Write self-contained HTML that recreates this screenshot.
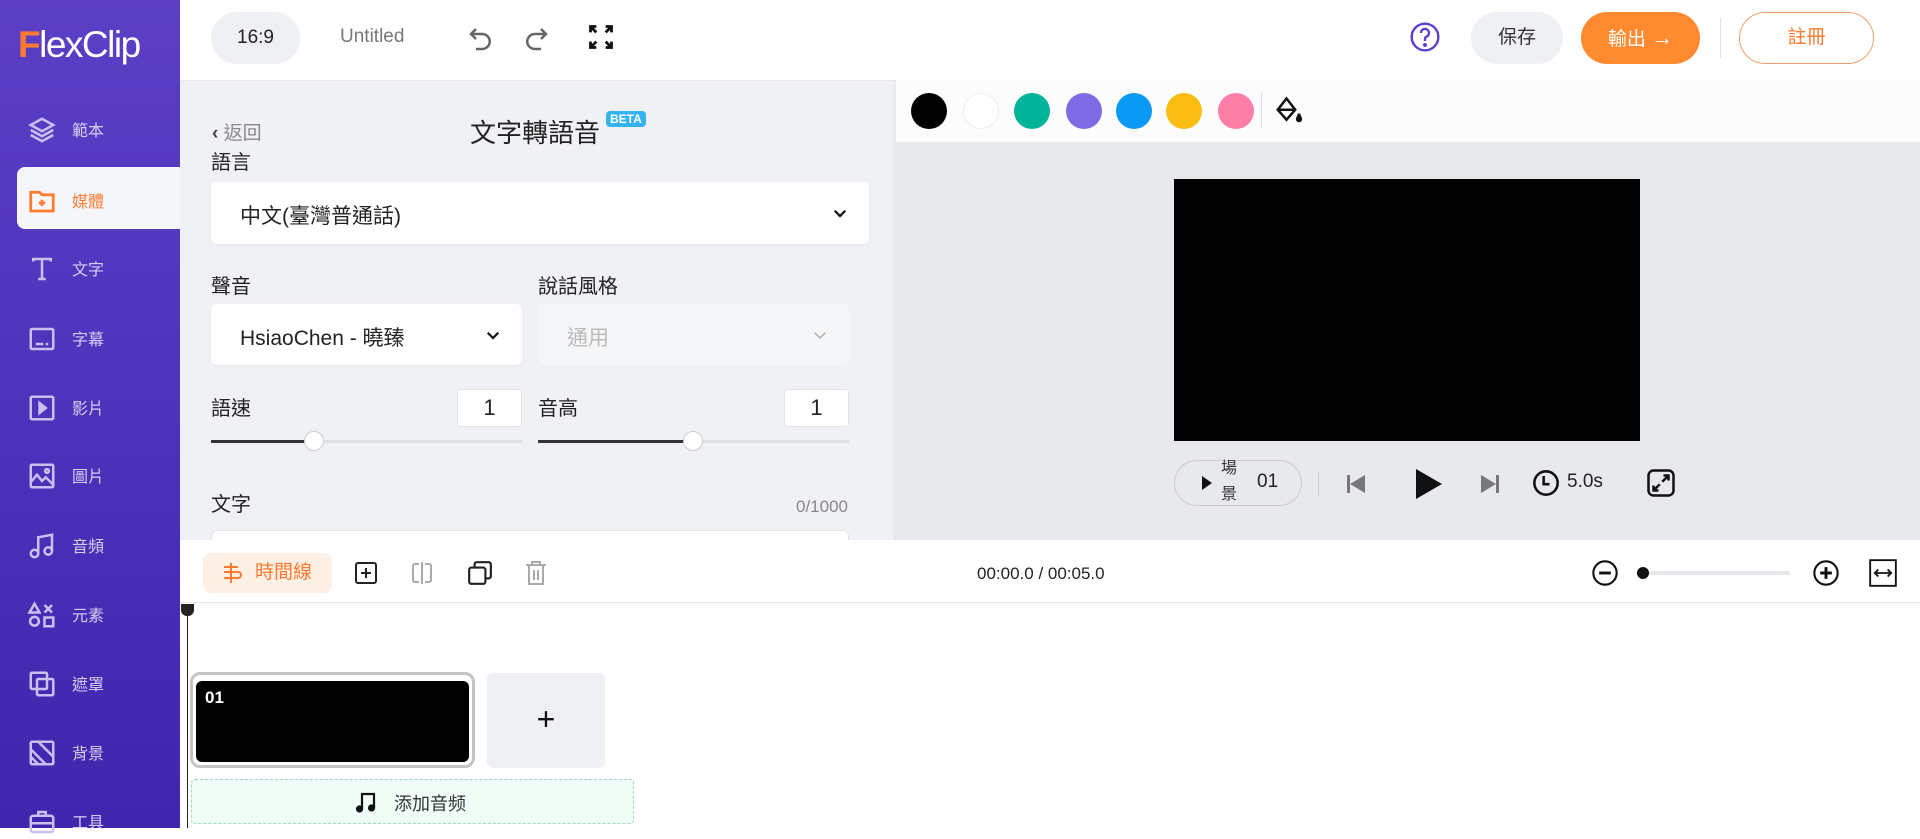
<!DOCTYPE html>
<html><head><meta charset="utf-8"><style>
*{box-sizing:border-box;margin:0;padding:0}
body{width:1920px;height:828px;overflow:hidden;position:relative;background:#fff;font-family:"Liberation Sans","Noto Sans CJK TC",sans-serif;color:#222}
.a{position:absolute}
.side{left:0;top:0;width:180px;height:828px;background:linear-gradient(180deg,#5b40c6 0%,#4a30b8 60%,#4026ad 100%)}
.si{position:absolute;left:0;width:180px;height:40px;color:#d6cff5;font-size:16px}
.si svg{position:absolute;left:27px;top:8px}
.si span{position:absolute;left:72px;top:10px}
.lbl{font-size:20px;color:#222}
.dd{background:#fff;border-radius:6px;box-shadow:0 1px 2px rgba(0,0,0,.05)}
.box{background:#fff;border:1px solid #e3e4e8;border-radius:3px;font-size:22px;text-align:center;line-height:36px}
.dot{width:36px;height:36px;border-radius:50%;top:93px}
</style></head><body>

<div class="a side"></div>
<div class="a" style="left:18px;top:24px;font-size:37px;color:#fff;letter-spacing:-1.5px;font-family:'Liberation Sans',sans-serif"><span style="color:#ff7a2e;font-weight:bold">F</span>lexClip</div>
<div class="a" style="left:17px;top:167px;width:163px;height:62px;background:#f5f6fa;border-radius:8px 0 0 8px"></div>
<div class="si" style="top:107px"><svg width="30" height="30" viewBox="0 0 24 24" fill="none" stroke="#c9c0f0" stroke-width="2"><path d="M12 3 3 8l9 5 9-5z M3 12l9 5 9-5 M3 16l9 5 9-5"/></svg><span>範本</span></div>
<div class="si" style="top:178px;color:#ff7a2e"><svg width="30" height="30" viewBox="0 0 24 24" fill="none" stroke="#ff7a2e" stroke-width="2.2"><path d="M3 5h7l2 2h9v13H3z"/><path d="M12 11v5M9.5 13.5h5"/></svg><span>媒體</span></div>
<div class="si" style="top:246px"><svg width="30" height="30" viewBox="0 0 24 24" fill="none" stroke="#c9c0f0" stroke-width="2"><path d="M5 6V4h14v2M12 4v16M9 20h6"/></svg><span>文字</span></div>
<div class="si" style="top:316px"><svg width="30" height="30" viewBox="0 0 24 24" fill="none" stroke="#c9c0f0" stroke-width="2"><rect x="3" y="4" width="18" height="16" rx="1"/><path d="M7 16h6M15 16h2"/></svg><span>字幕</span></div>
<div class="si" style="top:385px"><svg width="30" height="30" viewBox="0 0 24 24" fill="none" stroke="#c9c0f0" stroke-width="2"><rect x="3" y="3" width="18" height="18" rx="1"/><path d="M10 8v8l5-4z" fill="#c9c0f0"/></svg><span>影片</span></div>
<div class="si" style="top:453px"><svg width="30" height="30" viewBox="0 0 24 24" fill="none" stroke="#c9c0f0" stroke-width="2"><rect x="3" y="3" width="18" height="18" rx="1"/><path d="M3 17l5-6 4 5 3-3 6 6"/><circle cx="16" cy="8" r="1.5"/></svg><span>圖片</span></div>
<div class="si" style="top:523px"><svg width="30" height="30" viewBox="0 0 24 24" fill="none" stroke="#c9c0f0" stroke-width="2"><path d="M9 18V5l11-2v13"/><circle cx="6" cy="18" r="3"/><circle cx="17" cy="16" r="3"/></svg><span>音頻</span></div>
<div class="si" style="top:592px"><svg width="30" height="30" viewBox="0 0 24 24" fill="none" stroke="#c9c0f0" stroke-width="2"><path d="M6 3l4 7H2z M14 4l6 6M20 4l-6 6"/><circle cx="6" cy="17" r="3.5"/><rect x="14" y="14" width="7" height="7"/></svg><span>元素</span></div>
<div class="si" style="top:661px"><svg width="30" height="30" viewBox="0 0 24 24" fill="none" stroke="#c9c0f0" stroke-width="2"><rect x="3" y="3" width="13" height="13" rx="1"/><rect x="8" y="8" width="13" height="13" rx="1"/></svg><span>遮罩</span></div>
<div class="si" style="top:730px"><svg width="30" height="30" viewBox="0 0 24 24" fill="none" stroke="#c9c0f0" stroke-width="2"><rect x="3" y="3" width="18" height="18" rx="1"/><path d="M3 9l12 12M3 15l6 6M9 3l12 12"/></svg><span>背景</span></div>
<div class="si" style="top:799px"><svg width="30" height="30" viewBox="0 0 24 24" fill="none" stroke="#c9c0f0" stroke-width="2"><rect x="3" y="7" width="18" height="13" rx="2"/><path d="M9 7V4h6v3M3 13h18"/></svg><span>工具</span></div>

<div class="a" style="left:211px;top:12px;width:89px;height:52px;border-radius:26px;background:#eff0f4;font-size:19px;text-align:center;line-height:52px">16:9</div>
<div class="a" style="left:340px;top:26px;font-size:19px;color:#777">Untitled</div>
<svg class="a" style="left:466px;top:24px" width="30" height="30" viewBox="0 0 24 24" fill="none" stroke="#666" stroke-width="2"><path d="M8 4 4 8l4 4"/><path d="M4 8h9a6 6 0 0 1 0 12H8"/></svg>
<svg class="a" style="left:521px;top:24px" width="30" height="30" viewBox="0 0 24 24" fill="none" stroke="#666" stroke-width="2"><path d="M16 4l4 4-4 4"/><path d="M20 8h-9a6 6 0 0 0 0 12h5"/></svg>
<svg class="a" style="left:587px;top:23px" width="28" height="28" viewBox="0 0 24 24" fill="none" stroke="#111" stroke-width="2.4"><path d="M3 8V3h5M3 3l5 5M21 8V3h-5M21 3l-5 5M3 16v5h5M3 21l5-5M21 16v5h-5M21 21l-5-5"/></svg>
<svg class="a" style="left:1409px;top:21px" width="32" height="32" viewBox="0 0 24 24" fill="none" stroke="#5a3fd0" stroke-width="1.8"><circle cx="12" cy="12" r="10"/><path d="M9 9a3 3 0 1 1 4 2.8c-.8.4-1 1-1 2V15"/><circle cx="12" cy="18" r=".6" fill="#5a3fd0"/></svg>
<div class="a" style="left:1471px;top:12px;width:92px;height:52px;border-radius:26px;background:#eff0f4;font-size:19px;text-align:center;line-height:52px;color:#333">保存</div>
<div class="a" style="left:1581px;top:12px;width:119px;height:52px;border-radius:26px;background:#ff8a2f;font-size:19px;text-align:center;line-height:52px;color:#fff">輸出 <span style="font-size:22px;font-weight:bold">→</span></div>
<div class="a" style="left:1720px;top:18px;width:1px;height:40px;background:#e2e2e2"></div>
<div class="a" style="left:1739px;top:12px;width:135px;height:52px;border-radius:26px;border:1.5px solid #f0a06a;font-size:19px;text-align:center;line-height:49px;color:#ff7a2e">註冊</div>

<div class="a" style="left:180px;top:80px;width:714px;height:460px;background:#f0f1f5;border-top:1px solid #e8e8ec"></div>
<div class="a" style="left:212px;top:118px;font-size:19px;color:#888"><span style="color:#444;font-weight:bold">‹</span> 返回</div>
<div class="a" style="left:470px;top:113px;font-size:26px;color:#222">文字轉語音</div>
<div class="a" style="left:606px;top:111px;background:#33b4f0;color:#fff;font-size:12px;font-weight:bold;padding:1px 4px;border-radius:4px">BETA</div>
<div class="a lbl" style="left:211px;top:146px">語言</div>
<div class="a dd" style="left:211px;top:182px;width:658px;height:62px"><span class="a" style="left:29px;top:18px;font-size:21px">中文(臺灣普通話)</span><svg class="a" style="left:620px;top:22px" width="18" height="18" viewBox="0 0 24 24" fill="none" stroke="#111" stroke-width="3"><path d="M5 9l7 7 7-7"/></svg></div>
<div class="a lbl" style="left:211px;top:270px">聲音</div>
<div class="a lbl" style="left:538px;top:270px">說話風格</div>
<div class="a dd" style="left:211px;top:304px;width:311px;height:61px"><span class="a" style="left:29px;top:18px;font-size:21px">HsiaoChen - 曉臻</span><svg class="a" style="left:273px;top:22px" width="18" height="18" viewBox="0 0 24 24" fill="none" stroke="#111" stroke-width="3"><path d="M5 9l7 7 7-7"/></svg></div>
<div class="a" style="left:538px;top:304px;width:311px;height:61px;background:#f5f6f8;border-radius:6px"><span class="a" style="left:29px;top:18px;font-size:21px;color:#bbb">通用</span><svg class="a" style="left:273px;top:22px" width="18" height="18" viewBox="0 0 24 24" fill="none" stroke="#bbb" stroke-width="2.4"><path d="M5 9l7 7 7-7"/></svg></div>
<div class="a lbl" style="left:211px;top:392px">語速</div>
<div class="a box" style="left:457px;top:389px;width:65px;height:38px">1</div>
<div class="a lbl" style="left:538px;top:392px">音高</div>
<div class="a box" style="left:784px;top:389px;width:65px;height:38px">1</div>
<div class="a" style="left:211px;top:440px;width:311px;height:3px;background:#dfe0e4"></div>
<div class="a" style="left:211px;top:440px;width:103px;height:3px;background:#333"></div>
<div class="a" style="left:304px;top:431px;width:20px;height:20px;border-radius:50%;background:#fff;border:1px solid #ccc"></div>
<div class="a" style="left:538px;top:440px;width:311px;height:3px;background:#dfe0e4"></div>
<div class="a" style="left:538px;top:440px;width:155px;height:3px;background:#333"></div>
<div class="a" style="left:683px;top:431px;width:20px;height:20px;border-radius:50%;background:#fff;border:1px solid #ccc"></div>
<div class="a lbl" style="left:211px;top:488px">文字</div>
<div class="a" style="left:796px;top:497px;font-size:17px;color:#888">0/1000</div>
<div class="a" style="left:211px;top:530px;width:638px;height:10px;background:#fff;border:1px solid #e4e4e8;border-bottom:none;border-radius:6px 6px 0 0"></div>
<div class="a" style="left:894px;top:247px;width:22px;height:128px;background:#f7f8fb;border-radius:0 8px 8px 0"></div>
<div class="a" style="left:898px;top:300px;font-size:20px;color:#555">‹</div>

<div class="a" style="left:894px;top:80px;width:1026px;height:460px;background:#e8e9ed"></div>
<div class="a" style="left:896px;top:80px;width:1024px;height:62px;background:#fcfcfc"></div>
<div class="a dot" style="left:911px;background:#000"></div>
<div class="a dot" style="left:963px;background:#fff;border:1px solid #eee"></div>
<div class="a dot" style="left:1014px;background:#00b49a"></div>
<div class="a dot" style="left:1066px;background:#7e6ae2"></div>
<div class="a dot" style="left:1116px;background:#0a9af5"></div>
<div class="a dot" style="left:1166px;background:#fbbd14"></div>
<div class="a dot" style="left:1218px;background:#fd7ea6"></div>
<div class="a" style="left:1261px;top:92px;width:1px;height:36px;background:#ddd"></div>
<svg class="a" style="left:1274px;top:96px" width="30" height="30" viewBox="0 0 24 24" fill="none" stroke="#111" stroke-width="2"><path d="M10 2l-7 9 7 8 7-8z M3 11h14"/><path d="M20 14c0 2 -1.5 3-1.5 4.5a1.5 1.5 0 0 0 3 0C21.5 17 20 16 20 14z" fill="#111"/></svg>
<div class="a" style="left:1174px;top:179px;width:466px;height:262px;background:#000"></div>
<div class="a" style="left:1174px;top:460px;width:128px;height:46px;border:1px solid #ccc;border-radius:23px"></div>
<svg class="a" style="left:1200px;top:474px" width="14" height="18" viewBox="0 0 14 18"><path d="M2 2l10 7-10 7z" fill="#111"/></svg>
<div class="a" style="left:1221px;top:456px;font-size:16px;line-height:26px;color:#333;width:18px">場<br>景</div>
<div class="a" style="left:1257px;top:471px;font-size:19px">01</div>
<div class="a" style="left:1318px;top:472px;width:1px;height:24px;background:#ccc"></div>
<svg class="a" style="left:1344px;top:472px" width="24" height="24" viewBox="0 0 24 24" fill="#777"><rect x="3" y="3" width="3" height="18"/><path d="M21 3v18L6 12z"/></svg>
<svg class="a" style="left:1412px;top:467px" width="32" height="34" viewBox="0 0 32 34" fill="#111"><path d="M4 2l26 15L4 32z"/></svg>
<svg class="a" style="left:1478px;top:472px" width="24" height="24" viewBox="0 0 24 24" fill="#777"><rect x="18" y="3" width="3" height="18"/><path d="M3 3v18l15-9z"/></svg>
<svg class="a" style="left:1532px;top:469px" width="28" height="28" viewBox="0 0 24 24" fill="none" stroke="#111" stroke-width="2.2"><circle cx="12" cy="12" r="10"/><path d="M10 6v7h5"/></svg>
<div class="a" style="left:1567px;top:471px;font-size:19px">5.0s</div>
<svg class="a" style="left:1646px;top:468px" width="30" height="30" viewBox="0 0 24 24" fill="none" stroke="#111" stroke-width="2"><rect x="2" y="2" width="20" height="20" rx="4"/><path d="M14 6h4v4M18 6l-5 5M10 18H6v-4M6 18l5-5"/></svg>

<div class="a" style="left:180px;top:540px;width:1740px;height:63px;background:#fff;border-bottom:1px solid #e6e6e8"></div>
<div class="a" style="left:203px;top:553px;width:129px;height:40px;border-radius:8px;background:#fff0e6;color:#ff7a2e;font-size:19px;line-height:40px;padding-left:52px">時間線</div>
<svg class="a" style="left:219px;top:561px" width="24" height="24" viewBox="0 0 24 24" fill="none" stroke="#ff7a2e" stroke-width="2"><path d="M12 2v20M5 6h14M5 11h14a3 3 0 0 1 0 6H5"/></svg>
<svg class="a" style="left:354px;top:561px" width="24" height="24" viewBox="0 0 24 24" fill="none" stroke="#222" stroke-width="2"><rect x="2" y="2" width="20" height="20" rx="2"/><path d="M12 7v10M7 12h10"/></svg>
<svg class="a" style="left:410px;top:561px" width="24" height="24" viewBox="0 0 24 24" fill="none" stroke="#aaa" stroke-width="2"><path d="M9 3H5a2 2 0 0 0-2 2v14a2 2 0 0 0 2 2h4M15 3h4a2 2 0 0 1 2 2v14a2 2 0 0 1-2 2h-4M12 1v22"/></svg>
<svg class="a" style="left:467px;top:560px" width="26" height="26" viewBox="0 0 24 24" fill="none" stroke="#222" stroke-width="2"><rect x="2" y="7" width="15" height="15" rx="2"/><path d="M7 7V4a2 2 0 0 1 2-2h11a2 2 0 0 1 2 2v11a2 2 0 0 1-2 2h-3"/></svg>
<svg class="a" style="left:524px;top:560px" width="24" height="26" viewBox="0 0 24 26" fill="none" stroke="#aaa" stroke-width="2"><path d="M2 5h20M8 5V2h8v3M5 5v19h14V5M10 10v10M14 10v10"/></svg>
<div class="a" style="left:977px;top:564px;font-size:17px;color:#222">00:00.0 / 00:05.0</div>
<svg class="a" style="left:1591px;top:559px" width="28" height="28" viewBox="0 0 24 24" fill="none" stroke="#111" stroke-width="1.8"><circle cx="12" cy="12" r="10"/><path d="M7 12h10" stroke-width="2.5"/></svg>
<div class="a" style="left:1641px;top:571px;width:149px;height:4px;background:#e8e8ec;border-radius:2px"></div>
<div class="a" style="left:1637px;top:567px;width:12px;height:12px;border-radius:50%;background:#111"></div>
<svg class="a" style="left:1812px;top:559px" width="28" height="28" viewBox="0 0 24 24" fill="none" stroke="#111" stroke-width="1.8"><circle cx="12" cy="12" r="10"/><path d="M7 12h10M12 7v10" stroke-width="2.5"/></svg>
<svg class="a" style="left:1869px;top:559px" width="28" height="28" viewBox="0 0 24 24" fill="none" stroke="#111" stroke-width="1.6"><rect x="1" y="1" width="22" height="22"/><path d="M5 12h14M8 9l-3 3 3 3M16 9l3 3-3 3"/></svg>

<div class="a" style="left:187px;top:604px;width:1px;height:224px;background:#222"></div>
<div class="a" style="left:181px;top:604px;width:13px;height:12px;background:#222;border-radius:0 0 6px 6px"></div>
<div class="a" style="left:190px;top:672px;width:285px;height:96px;border:3px solid #c3c5c8;border-radius:10px;background:#fff"></div>
<div class="a" style="left:196px;top:681px;width:273px;height:81px;background:#000;border-radius:6px"></div>
<div class="a" style="left:205px;top:688px;color:#fff;font-weight:bold;font-size:17px">01</div>
<div class="a" style="left:487px;top:673px;width:118px;height:95px;background:#eff0f4;border-radius:6px;font-size:32px;text-align:center;line-height:92px;color:#111">+</div>
<div class="a" style="left:191px;top:779px;width:443px;height:45px;background:#effdf6;border:1px dashed #9fd9bc;border-radius:4px"></div>
<svg class="a" style="left:354px;top:789px" width="24" height="26" viewBox="0 0 24 24" fill="none" stroke="#111" stroke-width="2.2"><path d="M8 19V4h12v14"/><circle cx="5.5" cy="19" r="2.5" fill="#111"/><circle cx="17.5" cy="18" r="2.5" fill="#111"/></svg>
<div class="a" style="left:394px;top:790px;font-size:18px;color:#333">添加音频</div>
</body></html>
